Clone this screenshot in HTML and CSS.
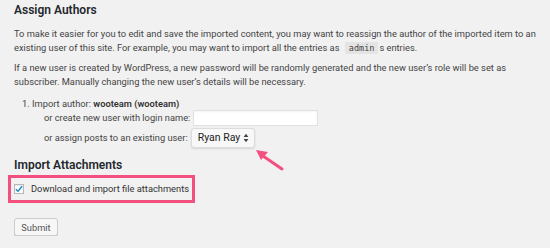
FILE: index.html
```html
<!DOCTYPE html>
<html lang="en">
<head>
    <meta charset="UTF-8">
    <meta name="viewport" content="width=device-width, initial-scale=1.0">
    <title>Import WordPress</title>
    <link rel="stylesheet" href="styles.css">
</head>
<body>
    <div class="wrap">
        <h2 class="first">Assign Authors</h2>
        <p class="intro">To make it easier for you to edit and save the imported content, you may want to reassign the author of the imported item to an existing user of this site. For example, you may want to import all the entries as <code>admin</code>s entries.</p>
        <p class="note">If a new user is created by WordPress, a new password will be randomly generated and the new user’s role will be set as subscriber. Manually changing the new user’s details will be necessary.</p>

        <ol class="authors">
            <li>
                <div class="author-line">Import author: <strong>wooteam (wooteam)</strong></div>
                <div class="author-row">
                    <label for="new-user">or create new user with login name:</label>
                    <input type="text" id="new-user" class="text-input">
                </div>
                <div class="author-row">
                    <span>or assign posts to an existing user:</span>
                    <span class="select">Ryan Ray
                        <svg class="select-arrows" width="6" height="10" viewBox="0 0 6 10"><path d="M3 0.8 L5.4 4 H0.6 Z M3 9.2 L5.4 6 H0.6 Z" fill="#444"/></svg>
                    </span>
                </div>
            </li>
        </ol>

        <h2 class="attach-title">Import Attachments</h2>
        <div class="highlight">
            <label class="check-label">
                <span class="checkbox">
                    <svg width="9" height="8" viewBox="0 0 9 8"><path d="M1 4.2 L3.4 6.6 L8 0.9" fill="none" stroke="#1e8cbe" stroke-width="1.6"/></svg>
                </span>
                Download and import file attachments
            </label>
        </div>

        <button class="button">Submit</button>

        <svg class="pointer" width="34" height="26" viewBox="0 0 34 26">
            <path d="M29 22 L10 9" stroke="#f4507f" stroke-width="3" stroke-linecap="round"/>
            <path d="M3 3 L15 5 L8 13 Z" fill="#f4507f"/>
        </svg>
    </div>
</body>
</html>
```

FILE: styles.css
```css
body {
    margin: 0;
    background: #f1f1f1;
    font-family: Roboto, "Liberation Sans", sans-serif;
    font-size: 9.3px;
    line-height: 14px;
    color: #444;
}
.wrap {
    position: relative;
    padding: 0 6px 0 14px;
}
h2 {
    margin: 0;
    font-size: 12px;
    line-height: 16px;
    font-weight: 600;
    color: #23282d;
}
h2.first {
    padding-top: 2px;
}
p {
    margin: 0;
}
.intro {
    margin-top: 9px;
}
.note {
    margin-top: 6px;
}
code {
    font-family: "DejaVu Sans Mono", monospace;
    font-size: 8.5px;
    background: #e4e4e4;
    padding: 1px 4px;
    margin: 0 1px 0 3px;
}
.authors {
    margin: 8px 0 0;
    padding-left: 18px;
}
.author-line {
    line-height: 13px;
}
.author-line strong {
    font-weight: 600;
    color: #333;
}
.author-row {
    display: flex;
    align-items: center;
    gap: 3px;
    padding-left: 12px;
}
.author-row + .author-row {
    margin-top: 2px;
}
.text-input {
    width: 125px;
    height: 16px;
    box-sizing: border-box;
    border: 1px solid #e2e2e2;
    background: #fff;
    box-shadow: inset 0 1px 2px rgba(0, 0, 0, 0.05);
    margin: 0;
    padding: 0;
}
.select {
    display: inline-flex;
    align-items: center;
    justify-content: space-between;
    width: 64px;
    height: 20px;
    box-sizing: border-box;
    padding: 0 5px 0 6px;
    background: #f8f8f8;
    border: 1px solid #dcdcdc;
    border-radius: 3px;
    box-shadow: 0 1px 2px rgba(0, 0, 0, 0.12);
    font-size: 10.5px;
    color: #222;
}
.attach-title {
    margin-top: 9px;
}
.highlight {
    display: inline-block;
    margin: 2px 0 0 -6px;
    padding: 4px 3px 4px 3px;
    border: 3px solid #f4507f;
}
.check-label {
    display: flex;
    align-items: center;
    gap: 7px;
    color: #333;
}
.checkbox {
    display: inline-flex;
    align-items: center;
    justify-content: center;
    width: 8px;
    height: 8px;
    border: 1px solid #b4b9be;
    background: #fff;
    box-shadow: inset 0 1px 2px rgba(0, 0, 0, 0.1);
}
.button {
    display: block;
    margin-top: 15px;
    width: 44px;
    height: 18px;
    padding: 0;
    font-family: inherit;
    font-size: 9.3px;
    color: #555;
    background: #f7f7f7;
    border: 1px solid #ccc;
    border-radius: 3px;
    box-shadow: 0 1px 0 #ccc;
}
.pointer {
    position: absolute;
    left: 253px;
    top: 147px;
}
```
